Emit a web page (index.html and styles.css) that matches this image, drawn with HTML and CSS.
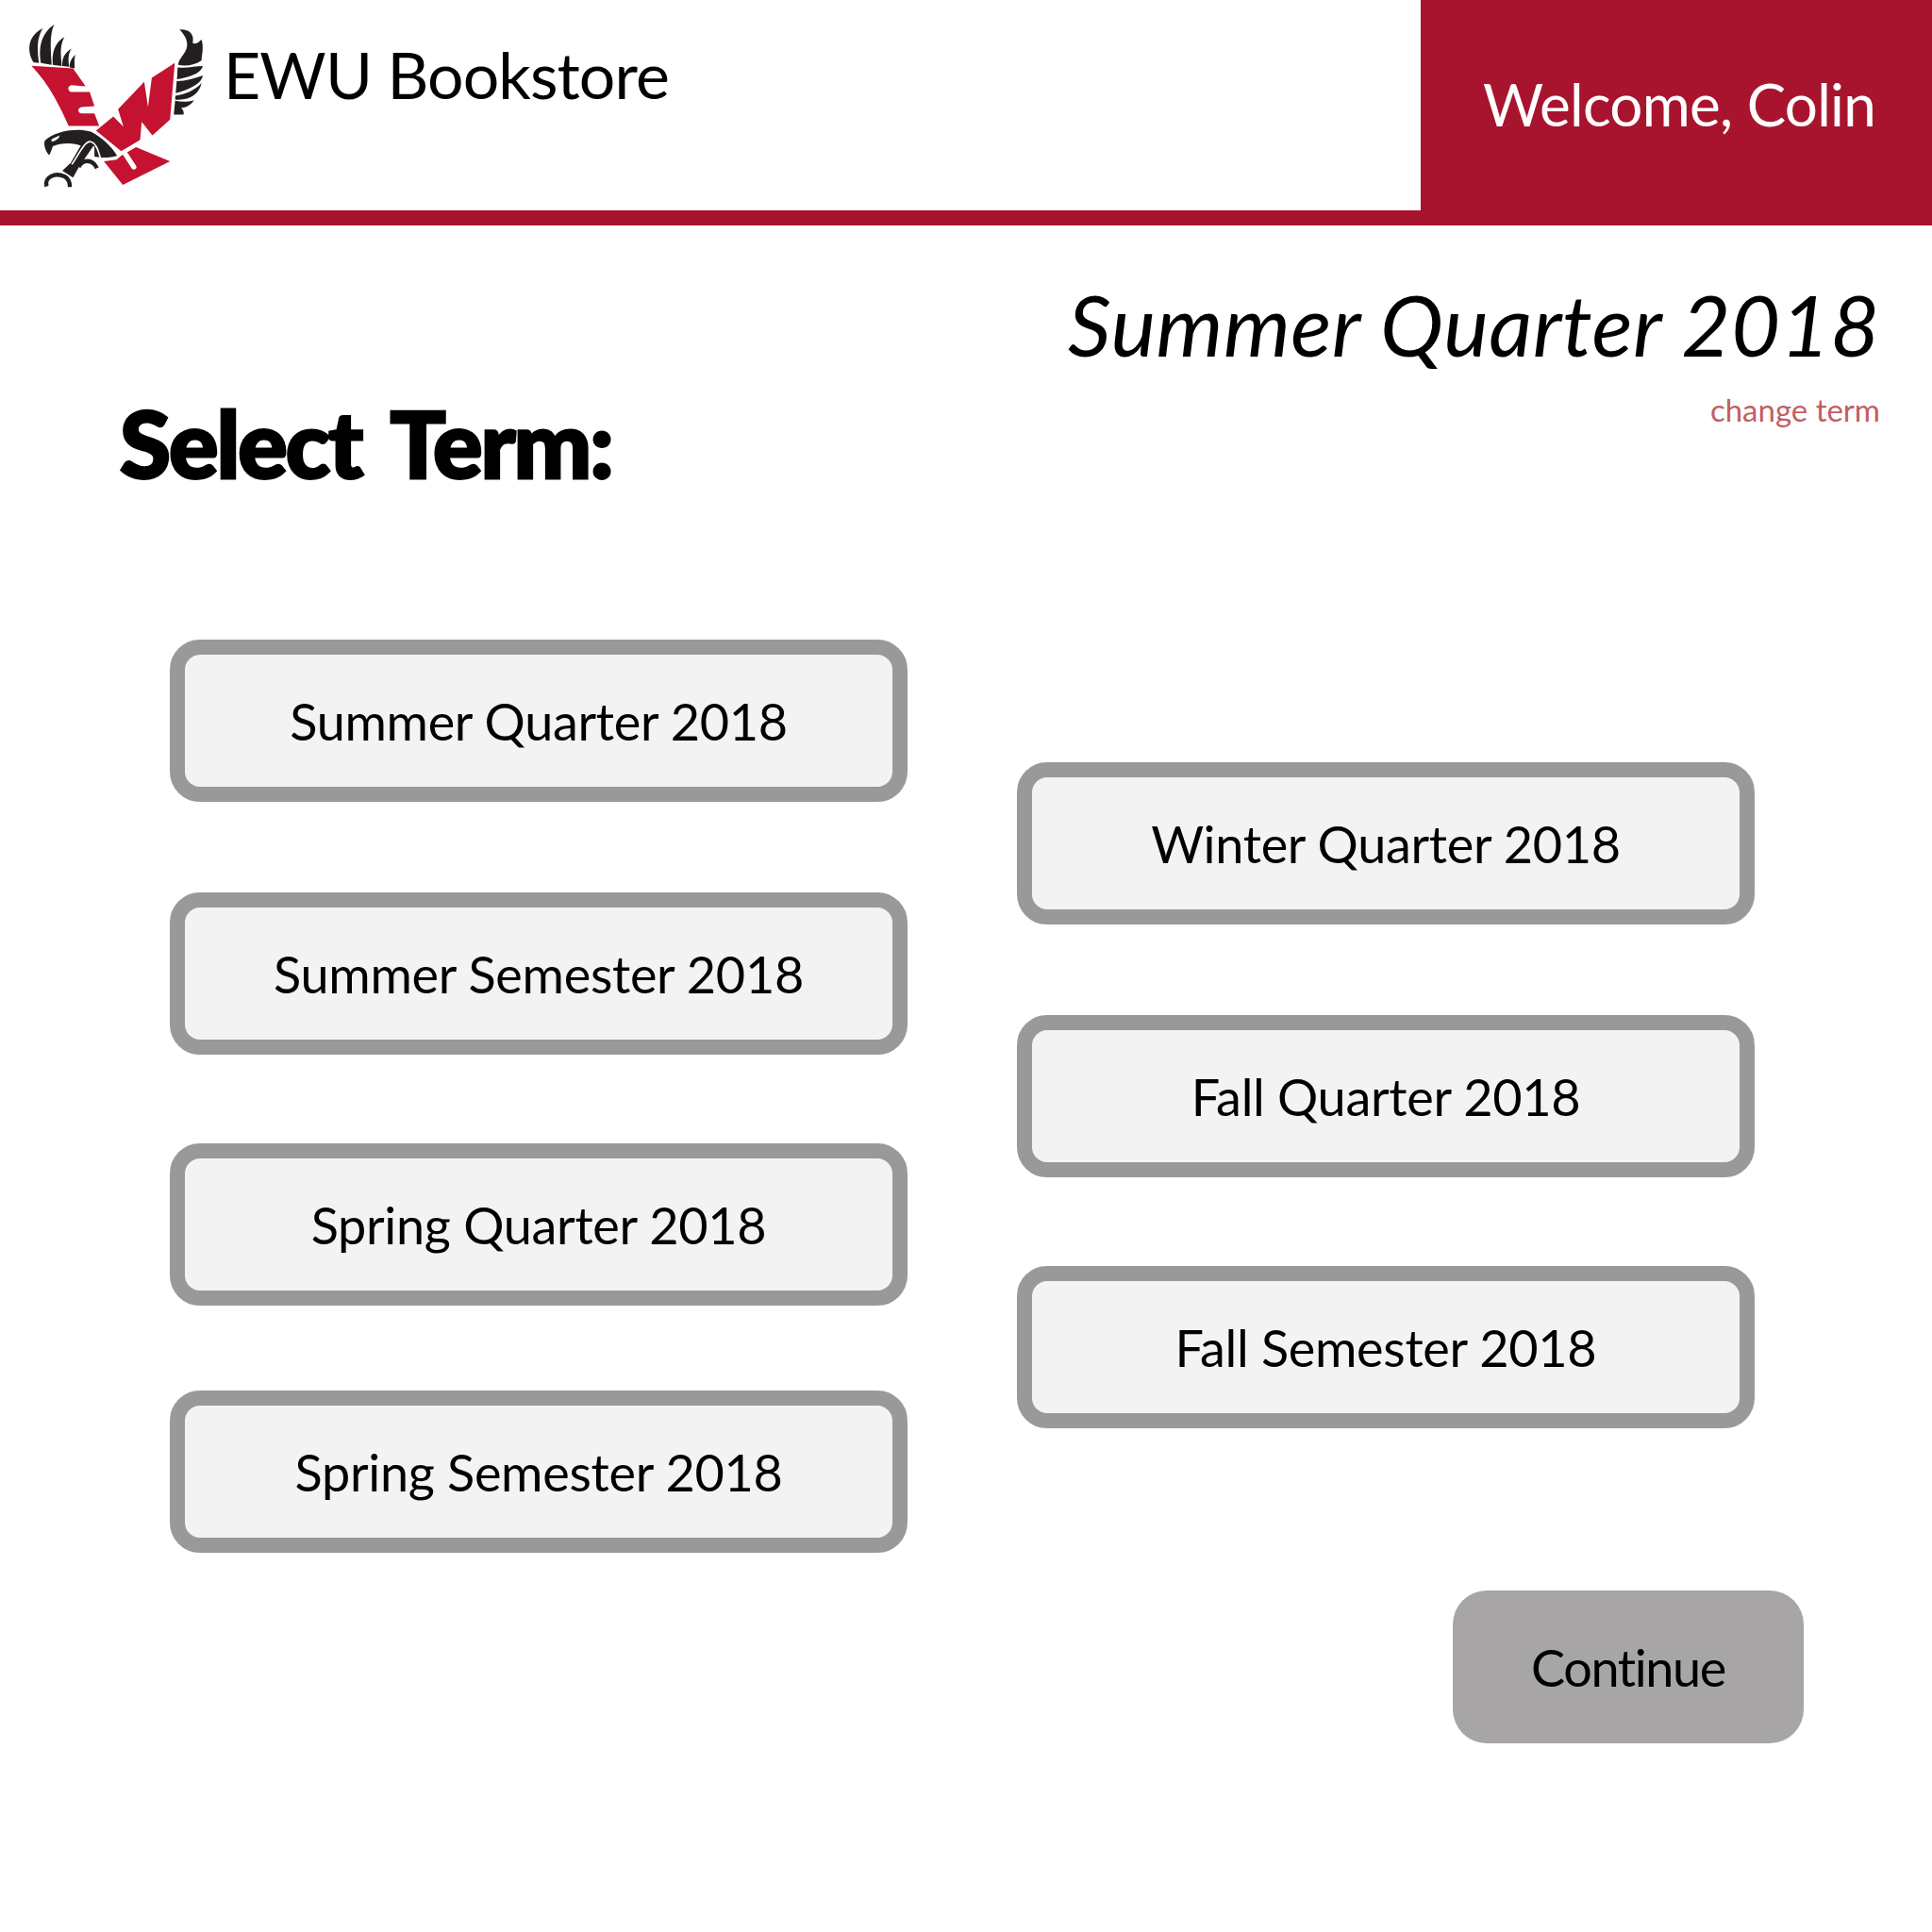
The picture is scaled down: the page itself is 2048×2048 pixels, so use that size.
FILE: index.html
```html
<!DOCTYPE html>
<html lang="en">
<head>
  <meta charset="UTF-8">
  <meta name="viewport" content="width=device-width, initial-scale=1.0">
  <title>EWU Bookstore</title>
  <link rel="stylesheet" href="styles.css">
</head>
<body>
  <header class="top">
    <div class="brand">
      <svg class="logo" viewBox="90 70 560 530" aria-hidden="true">
        <!-- left wing feathers -->
        <path class="ink" d="M106 196C84 160 88 112 136 88C116 120 118 160 124 198Z"/>
        <path class="ink" d="M130 198C122 150 130 105 172 76C156 110 162 160 164 204Z"/>
        <path class="ink" d="M168 204C164 170 172 135 205 115C188 145 194 175 196 208Z"/>
        <path class="ink" d="M198 208C196 185 205 165 227 152C214 172 218 192 219 210Z"/>
        <path class="ink" d="M221 212C220 198 226 184 240 172C234 188 238 200 237 215Z"/>
        <!-- right wing feathers -->
        <path class="ink" d="M570 92C600 90 618 105 612 135C625 140 632 130 640 124C648 150 640 175 640 190C620 205 590 210 566 204C566 185 590 170 594 145C596 125 585 108 570 92Z"/>
        <path class="ink" d="M564 212C590 216 622 208 644 208C640 225 620 240 562 250Z"/>
        <path class="ink" d="M561 256C590 256 622 246 644 238C640 262 610 280 558 294Z"/>
        <path class="ink" d="M557 302C590 298 620 284 640 262C632 300 600 318 556 314Z"/>
        <path class="ink" d="M556 318C575 322 598 322 616 316C604 335 585 340 575 340C584 350 585 358 582 362L552 362Z"/>
        <!-- E wing, W body, tail -->
        <path class="red" d="M100 207L232 215L272 272L226 268C214 272 214 286 226 290L285 290L300 335L258 338C246 342 246 356 258 358L300 358L315 398L218 398C192 340 160 270 100 207Z"/>
        <path class="red" d="M555 198L540 378L484 428L450 385L445 442L385 478L305 413L360 368L392 400L375 345L458 258L470 338L482 245Z"/>
        <path class="red" d="M330 510L390 585L540 510L432 465L385 492L370 505Z"/>
        <path class="slit slit-wide" d="M395 482L425 528"/>
        <!-- head and talons -->
        <path class="ink" d="M142 445C170 418 235 402 288 416C322 432 355 465 372 492C358 497 340 499 322 498L300 495L300 462L262 462C235 450 195 450 168 462C163 474 162 482 156 491C146 480 138 460 142 445Z"/>
        <path class="ink" d="M258 458L296 462L250 530L232 562L198 540L225 515Z"/>
        <path class="claw" d="M250 528C262 505 292 500 308 532"/>
        <path class="claw" d="M148 590C140 560 175 545 205 558C218 565 222 578 222 592"/>
        <path class="slit" d="M228 520C250 490 268 445 288 448C306 450 318 490 320 512"/>
        <path class="gap" d="M164 440L190 428C186 440 176 446 164 448Z"/>
      </svg>
      <span class="store-name">EWU Bookstore</span>
    </div>
    <div class="welcome">Welcome, Colin</div>
  </header>

  <main class="page">
    <div class="current-term">
      <h2>Summer Quarter 2018</h2>
      <a href="#" class="change-link">change term</a>
    </div>
    <h1>Select Term:</h1>

    <div class="term-columns">
      <div class="term-col">
        <button class="term-btn">Summer Quarter 2018</button>
        <button class="term-btn">Summer Semester 2018</button>
        <button class="term-btn">Spring Quarter 2018</button>
        <button class="term-btn">Spring Semester 2018</button>
      </div>
      <div class="term-col term-col-right">
        <button class="term-btn">Winter Quarter 2018</button>
        <button class="term-btn">Fall Quarter 2018</button>
        <button class="term-btn">Fall Semester 2018</button>
      </div>
    </div>

    <div class="actions">
      <button class="continue-btn">Continue</button>
    </div>
  </main>
</body>
</html>
```

FILE: styles.css
```css
body {
  font-family: Lato, "Open Sans", sans-serif;
  font-variant-ligatures: none;
  margin: 0;
  padding: 0;
  background-color: #fff;
  color: #000;
}
.top {
  display: flex;
  height: 239px;
}
.brand {
  flex: 1;
  height: 223px;
  border-bottom: 16px solid #a8142e;
  display: flex;
  align-items: flex-start;
  padding-left: 30px;
}
.logo {
  width: 187px;
  height: 177px;
  margin-top: 24px;
}
.ink {
  fill: #231f20;
}
.red {
  fill: #c41230;
}
.gap {
  fill: #fff;
}
.slit {
  fill: none;
  stroke: #fff;
  stroke-width: 5;
}
.slit-wide {
  stroke-width: 16;
  stroke-linecap: round;
}
.claw {
  fill: none;
  stroke: #231f20;
  stroke-width: 13;
}
.store-name {
  font-size: 68px;
  line-height: 86px;
  letter-spacing: -0.9px;
  margin: 36px 0 0 20px;
}
.welcome {
  width: 542px;
  box-sizing: border-box;
  background-color: #a8142e;
  color: white;
  font-size: 62px;
  line-height: 76px;
  letter-spacing: -0.7px;
  padding: 72px 0 0 66px;
}
.page {
  padding: 0 55px 0 127px;
}
.current-term {
  text-align: right;
  padding-top: 50px;
}
.current-term h2 {
  margin: 0;
  font-size: 90px;
  font-style: italic;
  font-weight: 400;
  line-height: 108px;
  letter-spacing: 0.5px;
}
.change-link {
  display: block;
  margin-top: 17px;
  font-size: 33px;
  line-height: 40px;
  color: #c25e62;
  text-decoration: none;
}
h1 {
  margin: -47px 0 0;
  font-size: 98px;
  font-weight: 900;
  line-height: 124px;
  letter-spacing: -2px;
  word-spacing: 12px;
  -webkit-text-stroke: 3px #000;
}
.term-columns {
  display: flex;
  gap: 116px;
  margin: 147px 0 0 53px;
}
.term-col {
  display: flex;
  flex-direction: column;
  gap: 94px;
}
.term-col-right {
  padding-top: 130px;
}
.term-btn {
  width: 782px;
  height: 172px;
  box-sizing: border-box;
  border: 16px solid #999;
  border-radius: 32px;
  background-color: #f3f3f3;
  color: #000;
  font-family: inherit;
  font-variant-ligatures: none;
  font-size: 54px;
  letter-spacing: -0.3px;
  cursor: pointer;
}
.term-btn:nth-child(2) {
  margin-top: 2px;
}
.term-btn:nth-child(4) {
  margin-top: -4px;
}
.actions {
  display: flex;
  justify-content: flex-end;
  margin: 40px 81px 0 0;
}
.continue-btn {
  width: 372px;
  height: 162px;
  border: none;
  border-radius: 36px;
  background-color: #a7a5a6;
  color: #000;
  font-family: inherit;
  font-variant-ligatures: none;
  font-size: 54px;
  letter-spacing: -1.4px;
  cursor: pointer;
}
```
